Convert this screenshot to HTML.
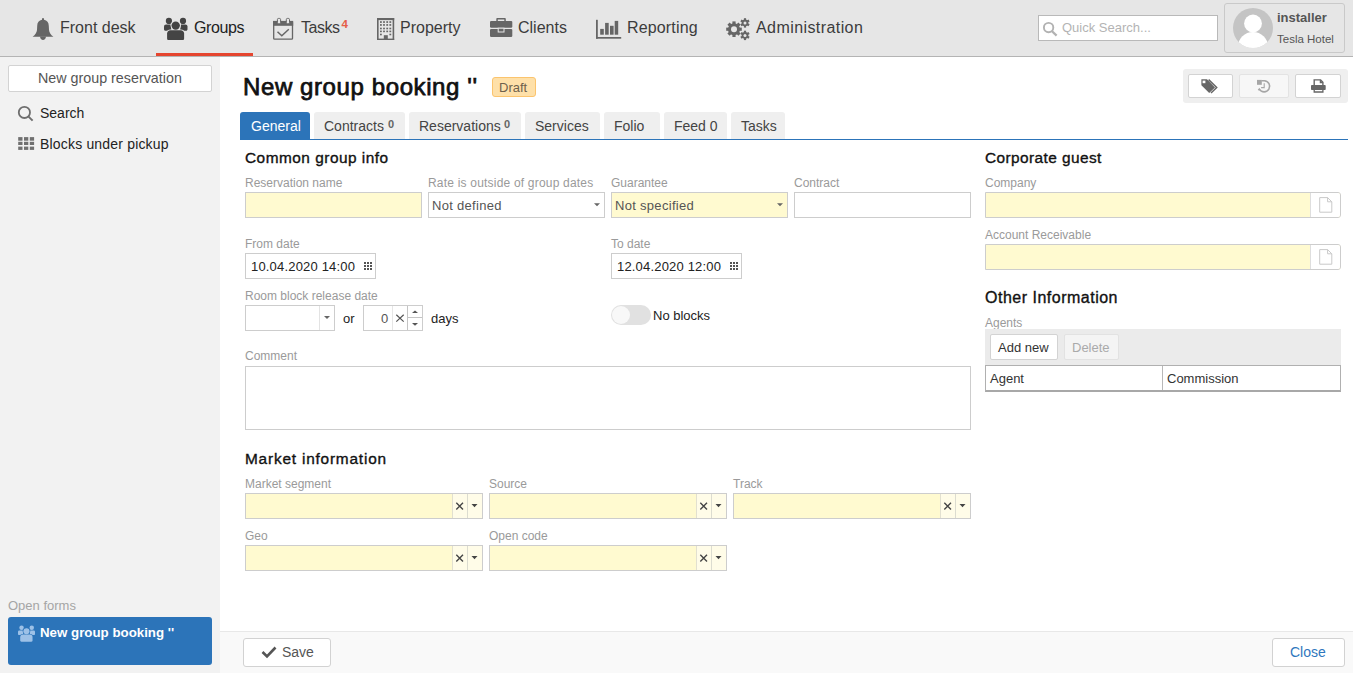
<!DOCTYPE html>
<html><head><meta charset="utf-8">
<style>
*{box-sizing:border-box;margin:0;padding:0}
html,body{width:1353px;height:673px;overflow:hidden;background:#fff;font-family:"Liberation Sans",sans-serif;color:#333}
.a{position:absolute}
.t{position:absolute;white-space:nowrap;line-height:1}
#hdr{left:0;top:0;width:1353px;height:57px;background:#e6e6e6;border-bottom:1px solid #b4b4b4}
.nav{font-size:16px;color:#3c3c3c;top:20px}
#side{left:0;top:57px;width:220px;height:616px;background:#f2f2f2}
.lbl{font-size:12px;color:#9a9a9a}
.inp{position:absolute;height:26px;border:1px solid #cdcdcd;background:#fff}
.yel{background:#fffad0}
.val{font-size:13px;color:#555}
.sec{font-size:15.4px;font-weight:normal;color:#111;letter-spacing:0.5px;-webkit-text-stroke:0.35px #111}
.tab{position:absolute;top:112px;height:27px;background:#efefef;border-radius:3px 3px 0 0}
.tabt{font-size:14px;color:#444;top:119px}
.btn{position:absolute;background:#fff;border:1px solid #cfcfcf;border-radius:2px}
</style></head>
<body>
<!-- header -->
<div id="hdr" class="a"></div>
<div class="a" style="left:156px;top:53px;width:97px;height:3px;background:#e5452f"></div>

<!-- nav icons -->
<svg class="a" style="left:0;top:0" width="880" height="56" viewBox="0 0 880 56">
<g fill="#666">
<path d="M42 18.2 L44 18.2 L44 19.8 C47 20.2 48.8 22.6 48.8 26 L49 30 C49.3 32.6 50.6 34.6 53.4 36.8 L32.6 36.8 C35.4 34.6 36.7 32.6 37 30 L37.2 26 C37.2 22.6 39 20.2 42 19.8 Z"/>
<path d="M40 36.5 L46 36.5 C45.8 38.8 44.6 40 43 40 C41.4 40 40.2 38.8 40 36.5 Z"/>
</g>
<g fill="#444">
<circle cx="168.9" cy="20.9" r="3.1"/><circle cx="183" cy="20.9" r="3.1"/>
<path d="M164 26.6 C164 25.3 164.9 24.6 166.1 24.6 L170.5 24.6 L171.5 30.8 L165.5 30.8 C164.6 30.8 164 30.2 164 29.3 Z"/>
<path d="M187.5 26.6 C187.5 25.3 186.6 24.6 185.4 24.6 L181 24.6 L180 30.8 L186 30.8 C186.9 30.8 187.5 30.2 187.5 29.3 Z"/>
</g>
<g fill="#444" stroke="#e6e6e6" stroke-width="1.6">
<circle cx="175.7" cy="25.6" r="4.2"/>
<path d="M167.1 33.6 C167.1 31.6 168.5 30.3 170.5 30.3 L180.7 30.3 C182.7 30.3 184.1 31.6 184.1 33.6 L184.1 38.4 C184.1 39.4 183.5 40 182.5 40 L168.7 40 C167.7 40 167.1 39.4 167.1 38.4 Z"/>
</g>
<g fill="#444">
<circle cx="175.7" cy="25.6" r="4.2"/>
<path d="M167.1 33.6 C167.1 31.6 168.5 30.3 170.5 30.3 L180.7 30.3 C182.7 30.3 184.1 31.6 184.1 33.6 L184.1 38.4 C184.1 39.4 183.5 40 182.5 40 L168.7 40 C167.7 40 167.1 39.4 167.1 38.4 Z"/>
</g>
<g fill="none" stroke="#666">
<rect x="273.7" y="21.6" width="18.8" height="17.6" rx="0.8" stroke-width="1.3"/>
<path d="M277.5 31.8 L281.8 35.8 L288.8 29.2" stroke-width="1.5"/>
</g>
<g fill="#666"><rect x="273" y="20.9" width="20.2" height="4.9"/></g>
<g fill="#e6e6e6" stroke="#666" stroke-width="1"><rect x="277.4" y="18.4" width="3.2" height="5.4" rx="1.2"/><rect x="286.3" y="18.4" width="3.2" height="5.4" rx="1.2"/></g>
<g fill="#666">
<rect x="377" y="18" width="17.2" height="2.1"/><rect x="377" y="18" width="1.6" height="22"/><rect x="392.6" y="18" width="1.6" height="22"/><rect x="377" y="38.6" width="17.2" height="1.4"/>
<rect x="380" y="21.2" width="1.8" height="1.7"/><rect x="383.1" y="21.2" width="1.8" height="1.7"/><rect x="386.3" y="21.2" width="1.8" height="1.7"/><rect x="389.4" y="21.2" width="1.8" height="1.7"/>
<rect x="380" y="24.1" width="1.8" height="1.7"/><rect x="383.1" y="24.1" width="1.8" height="1.7"/><rect x="386.3" y="24.1" width="1.8" height="1.7"/><rect x="389.4" y="24.1" width="1.8" height="1.7"/>
<rect x="380" y="27.7" width="1.8" height="1.6"/><rect x="383.1" y="27.7" width="1.8" height="1.6"/><rect x="386.3" y="27.7" width="1.8" height="1.6"/><rect x="389.4" y="27.7" width="1.8" height="1.6"/>
<rect x="380" y="30.6" width="1.8" height="1.6"/><rect x="383.1" y="30.6" width="1.8" height="1.6"/><rect x="386.3" y="30.6" width="1.8" height="1.6"/><rect x="389.4" y="30.6" width="1.8" height="1.6"/>
<rect x="380" y="33.7" width="1.8" height="1.6"/><rect x="389.4" y="33.7" width="1.8" height="1.6"/>
<rect x="383.8" y="35.2" width="4" height="4.2"/>
</g>
<g fill="#666">
<path d="M496.3 21 L496.3 18.8 C496.3 18.3 496.7 18 497.2 18 L504.9 18 C505.4 18 505.8 18.3 505.8 18.8 L505.8 21 L504.3 21 L504.3 19.6 L497.8 19.6 L497.8 21 Z"/>
<rect x="490" y="20.9" width="22.3" height="6.9" rx="1.2"/>
<rect x="490" y="28.9" width="22.3" height="8.1" rx="1.2"/>
</g>
<rect x="498.2" y="28.2" width="5.8" height="3.8" fill="#666" stroke="#e6e6e6" stroke-width="1"/>
<g fill="#666">
<rect x="596" y="19.8" width="1.8" height="18.9"/><rect x="596" y="37" width="25.2" height="1.7"/>
<rect x="600.2" y="28.9" width="3.6" height="5.8"/><rect x="605.1" y="22.9" width="3.6" height="11.8"/><rect x="610" y="25.8" width="3.6" height="8.9"/><rect x="614.7" y="20.9" width="3.5" height="13.8"/>
</g>
<g fill="#666">
<circle cx="734" cy="29.2" r="6"/>
<g transform="translate(734 29.2)"><rect x="-1.6" y="-7.8" width="3.2" height="15.6"/><rect x="-1.6" y="-7.8" width="3.2" height="15.6" transform="rotate(45)"/><rect x="-1.6" y="-7.8" width="3.2" height="15.6" transform="rotate(90)"/><rect x="-1.6" y="-7.8" width="3.2" height="15.6" transform="rotate(135)"/></g>
<g transform="translate(745 22.9)"><circle r="3.3"/><rect x="-1.1" y="-4.7" width="2.2" height="9.4"/><rect x="-1.1" y="-4.7" width="2.2" height="9.4" transform="rotate(60)"/><rect x="-1.1" y="-4.7" width="2.2" height="9.4" transform="rotate(120)"/></g>
<g transform="translate(745 35.4)"><circle r="3.3"/><rect x="-1.1" y="-4.7" width="2.2" height="9.4"/><rect x="-1.1" y="-4.7" width="2.2" height="9.4" transform="rotate(60)"/><rect x="-1.1" y="-4.7" width="2.2" height="9.4" transform="rotate(120)"/></g>
</g>
<g fill="#e6e6e6"><circle cx="734" cy="29.2" r="3"/><circle cx="745" cy="22.9" r="1.5"/><circle cx="745" cy="35.4" r="1.5"/></g>
</svg>
<div class="t nav" style="left:60px">Front desk</div>
<div class="t nav" style="left:194px;color:#222;letter-spacing:-0.4px">Groups</div>
<div class="t nav" style="left:301px;letter-spacing:-0.45px">Tasks</div>
<div class="t" style="left:341.5px;top:19px;font-size:11.5px;font-weight:bold;color:#e55d48">4</div>
<div class="t nav" style="left:400px">Property</div>
<div class="t nav" style="left:518px">Clients</div>
<div class="t nav" style="left:627px;letter-spacing:0.15px">Reporting</div>
<div class="t nav" style="left:756px;letter-spacing:0.42px">Administration</div>

<!-- quick search -->
<div class="a" style="left:1038px;top:15px;width:180px;height:26px;background:#fff;border:1px solid #b9b9b9"></div>
<svg class="a" style="left:1040px;top:18px" width="22" height="22" viewBox="1040 18 22 22"><circle cx="1048.6" cy="27.6" r="4.7" fill="none" stroke="#b2b2b2" stroke-width="1.9"/><path d="M1051.8 31 L1056.6 35.6" stroke="#b2b2b2" stroke-width="2.3"/></svg>
<div class="t" style="left:1062px;top:21px;font-size:13px;color:#b4b4b4">Quick Search...</div>

<!-- user -->
<div class="a" style="left:1224px;top:3px;width:121px;height:50px;border:1px solid #c9c9c9;border-radius:3px;background:#e6e6e6"></div>
<svg class="a" style="left:1233px;top:8px" width="40" height="40" viewBox="0 0 40 40"><defs><clipPath id="cc"><circle cx="20" cy="20" r="20"/></clipPath></defs><circle cx="20" cy="20" r="20" fill="#c4c4c4"/><g clip-path="url(#cc)" fill="#fff"><circle cx="20" cy="15.5" r="8.9"/><ellipse cx="20" cy="38.5" rx="15" ry="14.5"/></g></svg>
<div class="t" style="left:1277px;top:11px;font-size:13px;font-weight:bold;color:#555">installer</div>
<div class="t" style="left:1277px;top:34px;font-size:11.5px;color:#555">Tesla Hotel</div>

<!-- sidebar -->
<div id="side" class="a"></div>
<div class="btn" style="left:8px;top:65px;width:204px;height:27px;border-color:#d3d3d3"></div>
<div class="t" style="left:38px;top:71px;font-size:14.3px;color:#555">New group reservation</div>
<svg class="a" style="left:14px;top:102px" width="24" height="52" viewBox="14 102 24 52"><circle cx="24.4" cy="112.4" r="5.6" fill="none" stroke="#6e6e6e" stroke-width="1.8"/><path d="M28.3 116.4 L32.6 120.6" stroke="#6e6e6e" stroke-width="2"/>
<g fill="#707070"><rect x="18.2" y="137.1" width="4.3" height="3.6"/><rect x="24" y="137.1" width="4.3" height="3.6"/><rect x="29.8" y="137.1" width="4.3" height="3.6"/><rect x="18.2" y="141.8" width="4.3" height="3.2"/><rect x="24" y="141.8" width="4.3" height="3.2"/><rect x="29.8" y="141.8" width="4.3" height="3.2"/><rect x="18.2" y="146.6" width="4.3" height="3.3"/><rect x="24" y="146.6" width="4.3" height="3.3"/><rect x="29.8" y="146.6" width="4.3" height="3.3"/></g></svg>
<div class="t" style="left:40px;top:106px;font-size:14px;color:#222">Search</div>
<div class="t" style="left:40px;top:137px;font-size:14px;color:#222;letter-spacing:0.18px">Blocks under pickup</div>

<div class="t" style="left:8px;top:599px;font-size:13px;color:#a5a5a5">Open forms</div>
<div class="a" style="left:8px;top:617px;width:204px;height:48px;background:#2c74b9;border-radius:3px"></div>
<svg class="a" style="left:17px;top:625px" width="19" height="17" viewBox="163.5 17 24.5 23.5"><g fill="#9dc1e7">
<circle cx="168.9" cy="20.9" r="3.1"/><circle cx="183" cy="20.9" r="3.1"/>
<path d="M164 26.6 C164 25.3 164.9 24.6 166.1 24.6 L170.5 24.6 L171.5 30.8 L165.5 30.8 C164.6 30.8 164 30.2 164 29.3 Z"/>
<path d="M187.5 26.6 C187.5 25.3 186.6 24.6 185.4 24.6 L181 24.6 L180 30.8 L186 30.8 C186.9 30.8 187.5 30.2 187.5 29.3 Z"/></g>
<g fill="#9dc1e7" stroke="#2c74b9" stroke-width="1.6"><circle cx="175.7" cy="25.6" r="4.2"/><path d="M167.1 33.6 C167.1 31.6 168.5 30.3 170.5 30.3 L180.7 30.3 C182.7 30.3 184.1 31.6 184.1 33.6 L184.1 38.4 C184.1 39.4 183.5 40 182.5 40 L168.7 40 C167.7 40 167.1 39.4 167.1 38.4 Z"/></g>
<g fill="#9dc1e7"><circle cx="175.7" cy="25.6" r="4.2"/><path d="M167.1 33.6 C167.1 31.6 168.5 30.3 170.5 30.3 L180.7 30.3 C182.7 30.3 184.1 31.6 184.1 33.6 L184.1 38.4 C184.1 39.4 183.5 40 182.5 40 L168.7 40 C167.7 40 167.1 39.4 167.1 38.4 Z"/></g></svg>
<div class="t" style="left:40px;top:626px;font-size:13.3px;font-weight:bold;color:#fff">New group booking ''</div>

<!-- title -->
<div class="t" style="left:243px;top:75px;font-size:24px;color:#111;letter-spacing:0.6px;-webkit-text-stroke:0.75px #111">New group booking ''</div>
<div class="a" style="left:492px;top:77px;width:44px;height:20px;background:#fee0a9;border:1px solid #fbc46e;border-radius:3px"></div>
<div class="t" style="left:499px;top:81px;font-size:13px;color:#6e604c">Draft</div>

<!-- toolbar -->
<div class="a" style="left:1183px;top:69px;width:165px;height:34px;background:#efefef;border-radius:3px"></div>
<div class="btn" style="left:1188px;top:74px;width:45px;height:24px;border-color:#d3d3d3"></div>
<div class="btn" style="left:1239px;top:74px;width:50px;height:24px;background:#f7f7f7;border-color:#e3e3e3"></div>
<div class="btn" style="left:1295px;top:74px;width:46px;height:24px;border-color:#d3d3d3"></div>
<svg class="a" style="left:1190px;top:75px" width="150" height="22" viewBox="1190 75 150 22">
<path d="M1201.4 79.2 L1207 79.2 L1215 87.4 L1209.2 93 L1201.4 85.3 Z" fill="#666"/>
<rect x="1202.6" y="80.6" width="2.8" height="2.6" fill="#fff"/>
<path d="M1208.6 79.6 L1216.7 87.5 L1211 93" fill="none" stroke="#666" stroke-width="1.5"/>
<path d="M1261.5 80.7 L1264.3 80.7 A5.6 5.6 0 1 1 1259.3 89.2 L1258.4 90.3" fill="none" stroke="#a6a6a6" stroke-width="1.6"/>
<rect x="1257" y="79.9" width="4.8" height="4.9" fill="#a6a6a6"/>
<path d="M1264.2 83.2 L1264.2 87.6 L1261.1 87.6" fill="none" stroke="#a6a6a6" stroke-width="1.1"/>
<path d="M1314.2 90 L1314.2 79.9 L1320.6 79.9 L1322.9 82.2 L1322.9 85" fill="none" stroke="#666" stroke-width="1.4"/>
<path d="M1320.4 79.9 L1320.4 82.5 L1322.9 82.5" fill="none" stroke="#666" stroke-width="1.3"/>
<rect x="1311" y="85.1" width="14.7" height="5" rx="0.8" fill="#666"/>
<path d="M1314.2 90 L1314.2 92 L1322.9 92 L1322.9 90" fill="none" stroke="#666" stroke-width="1.3"/>
</svg>

<!-- tabs -->
<div class="a" style="left:240px;top:139px;width:1108px;height:1px;background:#2c74b9"></div>
<div class="tab" style="left:240px;width:70px;height:28px;background:#2c74b9"></div>
<div class="t tabt" style="left:251px;color:#fff">General</div>
<div class="tab" style="left:314px;width:91px"></div>
<div class="t tabt" style="left:324px">Contracts</div><div class="t" style="left:388px;top:119px;font-size:11px;font-weight:bold;color:#666">0</div>
<div class="tab" style="left:409px;width:112px"></div>
<div class="t tabt" style="left:419px">Reservations</div><div class="t" style="left:504px;top:119px;font-size:11px;font-weight:bold;color:#666">0</div>
<div class="tab" style="left:525px;width:75px"></div>
<div class="t tabt" style="left:535px">Services</div>
<div class="tab" style="left:604px;width:56px"></div>
<div class="t tabt" style="left:614px">Folio</div>
<div class="tab" style="left:664px;width:63px"></div>
<div class="t tabt" style="left:674px">Feed 0</div>
<div class="tab" style="left:731px;width:54px"></div>
<div class="t tabt" style="left:741px">Tasks</div>

<!-- common group info -->
<div class="t sec" style="left:245px;top:150px">Common group info</div>
<div class="t lbl" style="left:245px;top:177px">Reservation name</div>
<div class="inp yel" style="left:245px;top:192px;width:177px"></div>
<div class="t lbl" style="left:428px;top:177px;letter-spacing:0.2px">Rate is outside of group dates</div>
<div class="inp" style="left:428px;top:192px;width:177px"></div>
<div class="t val" style="left:432px;top:199px;letter-spacing:0.3px">Not defined</div>
<svg class="a" style="left:594px;top:203px" width="6" height="4" viewBox="0 0 6 4"><path d="M0 0.3 L6 0.3 L3 3.3 Z" fill="#666"/></svg>
<div class="t lbl" style="left:611px;top:177px">Guarantee</div>
<div class="inp yel" style="left:611px;top:192px;width:177px"></div>
<div class="t val" style="left:615px;top:199px;letter-spacing:0.3px">Not specified</div>
<svg class="a" style="left:777px;top:203px" width="6" height="4" viewBox="0 0 6 4"><path d="M0 0.3 L6 0.3 L3 3.3 Z" fill="#666"/></svg>
<div class="t lbl" style="left:794px;top:177px">Contract</div>
<div class="inp" style="left:794px;top:192px;width:177px"></div>

<div class="t lbl" style="left:245px;top:238px">From date</div>
<div class="inp" style="left:245px;top:253px;width:131px"></div>
<div class="t val" style="left:251px;top:260px;color:#222;letter-spacing:0.18px">10.04.2020 14:00</div>
<svg class="a" style="left:364px;top:262px" width="8" height="8" viewBox="0 0 8 8"><g fill="#555"><rect x="0" y="0" width="2" height="2"/><rect x="3" y="0" width="2" height="2"/><rect x="6" y="0" width="2" height="2"/><rect x="0" y="3" width="2" height="2"/><rect x="3" y="3" width="2" height="2"/><rect x="6" y="3" width="2" height="2"/><rect x="0" y="6" width="2" height="2"/><rect x="3" y="6" width="2" height="2"/><rect x="6" y="6" width="2" height="2"/></g></svg>
<div class="t lbl" style="left:611px;top:238px">To date</div>
<div class="inp" style="left:611px;top:253px;width:131px"></div>
<div class="t val" style="left:617px;top:260px;color:#222;letter-spacing:0.18px">12.04.2020 12:00</div>
<svg class="a" style="left:730px;top:262px" width="8" height="8" viewBox="0 0 8 8"><g fill="#555"><rect x="0" y="0" width="2" height="2"/><rect x="3" y="0" width="2" height="2"/><rect x="6" y="0" width="2" height="2"/><rect x="0" y="3" width="2" height="2"/><rect x="3" y="3" width="2" height="2"/><rect x="6" y="3" width="2" height="2"/><rect x="0" y="6" width="2" height="2"/><rect x="3" y="6" width="2" height="2"/><rect x="6" y="6" width="2" height="2"/></g></svg>

<div class="t lbl" style="left:245px;top:290px">Room block release date</div>
<div class="inp" style="left:245px;top:305px;width:90px"></div>
<div class="a" style="left:319px;top:306px;width:1px;height:24px;background:#e3e3e3"></div>
<svg class="a" style="left:324px;top:316px" width="6" height="3" viewBox="0 0 6 3"><path d="M0 0 L6 0 L3 3 Z" fill="#666"/></svg>
<div class="t val" style="left:343px;top:312px;color:#222">or</div>
<div class="inp" style="left:363px;top:305px;width:60px"></div>
<div class="a" style="left:392px;top:306px;width:1px;height:24px;background:#e6e6e6"></div>
<div class="a" style="left:407px;top:306px;width:1px;height:24px;background:#c4c4c4"></div>
<div class="a" style="left:408px;top:317px;width:14px;height:1px;background:#c4c4c4"></div>
<div class="t val" style="left:381px;top:312px">0</div>
<svg class="a" style="left:392px;top:306px" width="30" height="24" viewBox="392 306 30 24"><path d="M396.3 314.8 L403.7 321.6 M403.7 314.8 L396.3 321.6" stroke="#555" stroke-width="1.2"/><path d="M412 313 L418 313 L415 310.6 Z" fill="#555"/><path d="M412 323.1 L418 323.1 L415 325.8 Z" fill="#555"/></svg>
<div class="t val" style="left:431px;top:312px;color:#222">days</div>

<div class="a" style="left:611px;top:305px;width:40px;height:20px;background:#e1e1e1;border-radius:10px"></div>
<div class="a" style="left:612px;top:306px;width:18px;height:18px;background:#f8f8f8;border-radius:9px"></div>
<div class="t val" style="left:653px;top:309px;color:#222">No blocks</div>

<div class="t lbl" style="left:245px;top:350px">Comment</div>
<div class="inp" style="left:245px;top:366px;width:726px;height:64px"></div>

<!-- market -->
<div class="t sec" style="left:245px;top:451px;letter-spacing:0.8px">Market information</div>
<div class="t lbl" style="left:245px;top:478px">Market segment</div>
<div class="inp yel" style="left:245px;top:493px;width:238px"></div><div class="a" style="left:452px;top:494px;width:30px;height:24px;background:#fffce8;border-left:1px solid #e2e0d0"></div><div class="a" style="left:467px;top:494px;width:1px;height:24px;background:#dcdcd0"></div><svg class="a" style="left:452px;top:493px" width="32" height="26" viewBox="452 493 32 26"><path d="M456.3 502.8 L463.0 509.5 M463.0 502.8 L456.3 509.5" stroke="#444" stroke-width="1.35"/><path d="M471.5 504 L477.5 504 L474.5 507.2 Z" fill="#444"/></svg>
<div class="t lbl" style="left:489px;top:478px">Source</div>
<div class="inp yel" style="left:489px;top:493px;width:238px"></div><div class="a" style="left:696px;top:494px;width:30px;height:24px;background:#fffce8;border-left:1px solid #e2e0d0"></div><div class="a" style="left:711px;top:494px;width:1px;height:24px;background:#dcdcd0"></div><svg class="a" style="left:696px;top:493px" width="32" height="26" viewBox="696 493 32 26"><path d="M700.3 502.8 L707.0 509.5 M707.0 502.8 L700.3 509.5" stroke="#444" stroke-width="1.35"/><path d="M715.5 504 L721.5 504 L718.5 507.2 Z" fill="#444"/></svg>
<div class="t lbl" style="left:733px;top:478px">Track</div>
<div class="inp yel" style="left:733px;top:493px;width:238px"></div><div class="a" style="left:940px;top:494px;width:30px;height:24px;background:#fffce8;border-left:1px solid #e2e0d0"></div><div class="a" style="left:955px;top:494px;width:1px;height:24px;background:#dcdcd0"></div><svg class="a" style="left:940px;top:493px" width="32" height="26" viewBox="940 493 32 26"><path d="M944.3 502.8 L951.0 509.5 M951.0 502.8 L944.3 509.5" stroke="#444" stroke-width="1.35"/><path d="M959.5 504 L965.5 504 L962.5 507.2 Z" fill="#444"/></svg>
<div class="t lbl" style="left:245px;top:530px">Geo</div>
<div class="inp yel" style="left:245px;top:545px;width:238px"></div><div class="a" style="left:452px;top:546px;width:30px;height:24px;background:#fffce8;border-left:1px solid #e2e0d0"></div><div class="a" style="left:467px;top:546px;width:1px;height:24px;background:#dcdcd0"></div><svg class="a" style="left:452px;top:545px" width="32" height="26" viewBox="452 545 32 26"><path d="M456.3 554.8 L463.0 561.5 M463.0 554.8 L456.3 561.5" stroke="#444" stroke-width="1.35"/><path d="M471.5 556 L477.5 556 L474.5 559.2 Z" fill="#444"/></svg>
<div class="t lbl" style="left:489px;top:530px">Open code</div>
<div class="inp yel" style="left:489px;top:545px;width:238px"></div><div class="a" style="left:696px;top:546px;width:30px;height:24px;background:#fffce8;border-left:1px solid #e2e0d0"></div><div class="a" style="left:711px;top:546px;width:1px;height:24px;background:#dcdcd0"></div><svg class="a" style="left:696px;top:545px" width="32" height="26" viewBox="696 545 32 26"><path d="M700.3 554.8 L707.0 561.5 M707.0 554.8 L700.3 561.5" stroke="#444" stroke-width="1.35"/><path d="M715.5 556 L721.5 556 L718.5 559.2 Z" fill="#444"/></svg>

<!-- right column -->
<div class="t sec" style="left:985px;top:150px;letter-spacing:0.43px">Corporate guest</div>
<div class="t lbl" style="left:985px;top:177px">Company</div>
<div class="inp yel" style="left:985px;top:192px;width:356px;border-radius:0 3px 3px 0"></div>
<div class="a" style="left:1310px;top:193px;width:30px;height:24px;background:#fff;border-left:1px solid #dedede;border-radius:0 2px 2px 0"></div>
<svg class="a" style="left:1318px;top:196px" width="16" height="18" viewBox="1318 196 16 18"><path d="M1319.7 197.6 L1327.6 197.6 L1331.8 201.8 L1331.8 212.2 L1319.7 212.2 Z M1327.6 197.6 L1327.6 201.8 L1331.8 201.8" fill="none" stroke="#c9c9c9" stroke-width="1"/></svg>
<div class="t lbl" style="left:985px;top:229px">Account Receivable</div>
<div class="inp yel" style="left:985px;top:244px;width:356px;border-radius:0 3px 3px 0"></div>
<div class="a" style="left:1310px;top:245px;width:30px;height:24px;background:#fff;border-left:1px solid #dedede;border-radius:0 2px 2px 0"></div>
<svg class="a" style="left:1318px;top:248px" width="16" height="18" viewBox="1318 196 16 18"><path d="M1319.7 197.6 L1327.6 197.6 L1331.8 201.8 L1331.8 212.2 L1319.7 212.2 Z M1327.6 197.6 L1327.6 201.8 L1331.8 201.8" fill="none" stroke="#c9c9c9" stroke-width="1"/></svg>
<div class="t sec" style="left:985px;top:290px;font-size:16px;letter-spacing:0.5px">Other Information</div>
<div class="t lbl" style="left:985px;top:317px">Agents</div>
<div class="a" style="left:985px;top:329px;width:356px;height:37px;background:#ebebeb"></div>
<div class="btn" style="left:990px;top:334px;width:68px;height:26px;border-color:#d3d3d3"></div>
<div class="t val" style="left:998px;top:341px;color:#333">Add new</div>
<div class="btn" style="left:1064px;top:334px;width:55px;height:26px;background:#f4f4f4;border-color:#e2e2e2"></div>
<div class="t val" style="left:1072px;top:341px;color:#aaa">Delete</div>
<div class="a" style="left:985px;top:365px;width:356px;height:27px;background:#fff;border:1px solid #b0b0b0;border-bottom:2px solid #a8a8a8"></div>
<div class="a" style="left:1162px;top:366px;width:1px;height:24px;background:#b8b8b8"></div>
<div class="t val" style="left:990px;top:372px;color:#333">Agent</div>
<div class="t val" style="left:1167px;top:372px;color:#333">Commission</div>

<!-- footer -->
<div class="a" style="left:220px;top:631px;width:1133px;height:42px;background:#f9f9f9;border-top:1px solid #e8e8e8"></div>
<div class="btn" style="left:243px;top:638px;width:88px;height:29px;border-color:#d2d2d2;border-radius:3px"></div>
<svg class="a" style="left:260px;top:644px" width="18" height="16" viewBox="260 644 18 16"><path d="M262.5 652 L267 656.5 L275.5 647.5" fill="none" stroke="#555" stroke-width="2.6"/></svg>
<div class="t" style="left:282px;top:645px;font-size:14px;color:#555">Save</div>
<div class="btn" style="left:1272px;top:638px;width:73px;height:29px;border-color:#d2d2d2;border-radius:3px"></div>
<div class="t" style="left:1290px;top:645px;font-size:14px;color:#2f77bd">Close</div>
</body></html>
